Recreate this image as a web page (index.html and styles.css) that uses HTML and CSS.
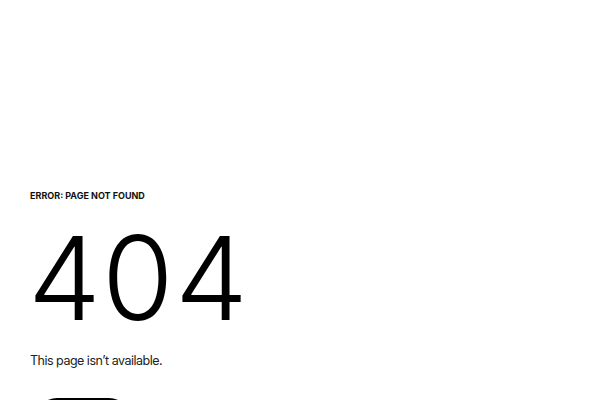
FILE: index.html
```html
<!DOCTYPE html>
<html lang="en">
<head>
    <meta charset="UTF-8">
    <meta name="viewport" content="width=device-width, initial-scale=1.0">
    <title>Page not found</title>
    <link rel="stylesheet" href="styles.css">
</head>
<body>
    <main class="error-page">
        <p class="error-label">ERROR: PAGE NOT FOUND</p>
        <h1 class="error-code">404</h1>
        <p class="error-text">This page isn’t available.</p>
        <a class="home-button" href="#">Go to Homepage</a>
    </main>
</body>
</html>
```

FILE: styles.css
```css
body {
    font-family: Inter, "Noto Sans", sans-serif;
    background-color: #fff;
    color: #000;
    margin: 0;
}
.error-page {
    padding: 190px 30px 0;
    display: flex;
    flex-direction: column;
    align-items: flex-start;
}
.error-label {
    margin: 0;
    font-size: 9px;
    font-weight: 700;
    line-height: 12px;
    color: #111;
}
.error-code {
    margin: 16px 0 0 -2px;
    font-size: 116px;
    font-weight: 350;
    line-height: 120px;
    letter-spacing: 0.01em;
}
.error-text {
    margin: 14px 0 0;
    font-size: 12.5px;
    letter-spacing: -0.04em;
    line-height: 18px;
    color: #222;
}
.home-button {
    margin: 28px 0 0 5px;
    display: inline-block;
    width: 96px;
    height: 44px;
    border-radius: 22px;
    background-color: #000;
    color: #fff;
    text-decoration: none;
    font-size: 13px;
    text-align: center;
    line-height: 44px;
}
```
